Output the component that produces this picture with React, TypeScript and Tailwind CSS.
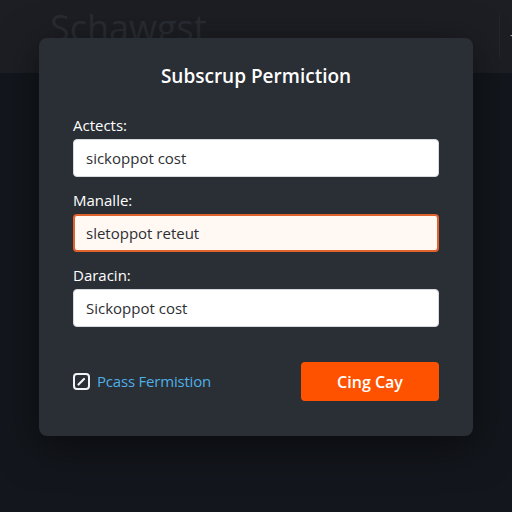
import { useState } from "react";

function EditBox() {
  return (
    <svg width="17" height="17" viewBox="0 0 17 17" fill="none">
      <rect x="1" y="1" width="15" height="15" rx="3" stroke="#f3f4f6" strokeWidth="2" />
      <path d="M5.5 11.5 L11 6" stroke="#f3f4f6" strokeWidth="2.2" strokeLinecap="round" />
    </svg>
  );
}

const fields = [
  { label: "Actects:", value: "sickoppot cost", focus: false },
  { label: "Manalle:", value: "sletoppot reteut", focus: true },
  { label: "Daracin:", value: "Sickoppot cost", focus: false },
];

export default function App() {
  const [values, setValues] = useState(fields.map((f) => f.value));

  return (
    <div className="relative h-[512px] w-[512px] overflow-hidden bg-[#13161c] font-['Open_Sans',sans-serif]">
      {/* page behind the dialog */}
      <header className="flex h-[73px] items-start justify-between bg-[#1c1e23]">
        <span className="ml-[50px] mt-[6px] text-[36px] leading-[44px] text-[#292c32]">Schawgst</span>
        <div className="mt-[14px] flex h-[44px] w-[13px] items-center border-l border-[#22252a] pl-[10px] text-[9px] text-white">
          ·
        </div>
      </header>

      {/* dialog */}
      <div className="absolute left-[39px] top-[38px] w-[434px] rounded-[8px] bg-[#2a2e35] px-[34px] pb-[35px] pt-[26px] shadow-[0_10px_40px_rgba(0,0,0,0.5)]">
        <h2 className="text-center text-[19px] font-semibold leading-[24px] text-white">Subscrup Permiction</h2>

        <div className="mt-[27px] flex flex-col gap-[13px]">
          {fields.map((f, i) => (
            <label key={f.label} className="flex flex-col gap-[4px]">
              <span className="text-[15px] font-medium leading-[20px] text-white">{f.label}</span>
              <input
                value={values[i]}
                onChange={(e) => setValues(values.map((v, j) => (j === i ? e.target.value : v)))}
                className={
                  f.focus
                    ? "h-[38px] w-full rounded-[4px] border-2 border-[#e0622c] bg-[#fff8f3] px-[11px] text-[15px] text-[#2d2f33] outline-none"
                    : "h-[38px] w-full rounded-[4px] border border-[#d8dadd] bg-white px-[12px] text-[15px] text-[#2d2f33] outline-none"
                }
              />
            </label>
          ))}
        </div>

        <div className="mt-[35px] flex items-center justify-between">
          <button className="flex items-center gap-[7px] text-[15px] tracking-[-0.2px] text-[#4fb0e6]">
            <EditBox />
            Pcass Fermistion
          </button>
          <button className="h-[39px] w-[138px] rounded-[4px] bg-[#ff5200] text-[16px] font-semibold text-white">
            Cing Cay
          </button>
        </div>
      </div>
    </div>
  );
}
